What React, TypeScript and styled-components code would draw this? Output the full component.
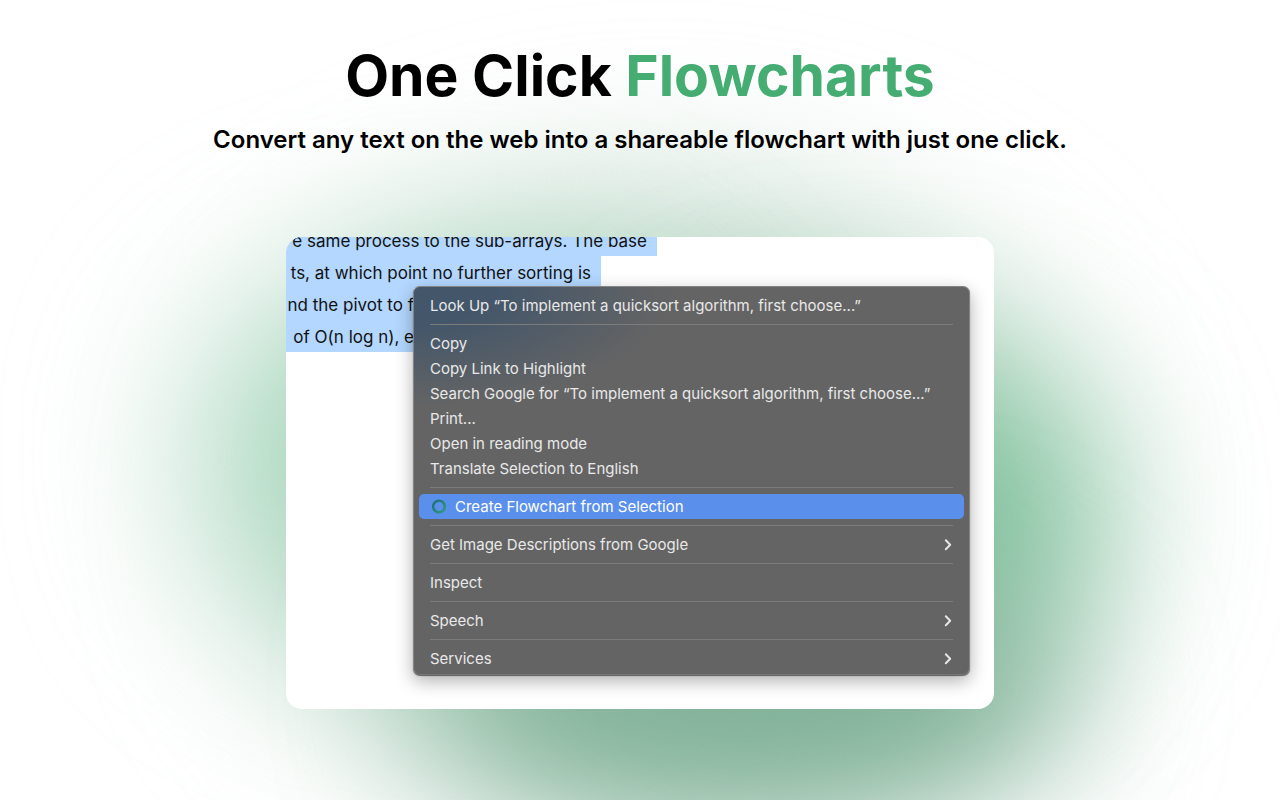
import React from "react";
import styled, { createGlobalStyle } from "styled-components";

const GlobalStyle = createGlobalStyle`
  * { box-sizing: border-box; }
  body {
    margin: 0;
    background: #ffffff;
    color: #000000;
    font-family: Inter, "Liberation Sans", sans-serif;
  }
`;

const Page = styled.main`
  position: relative;
  display: flex;
  flex-direction: column;
  align-items: center;
  min-height: 100vh;
  padding: 40px 24px 91px;
  overflow: hidden;
  isolation: isolate;
`;

const Glow = styled.div<{ $x: number; $y: number; $w: number; $h: number; $blur: number; $color: string }>`
  position: absolute;
  z-index: -1;
  left: calc(50% + ${(p) => p.$x}px);
  top: ${(p) => p.$y}px;
  width: ${(p) => p.$w}px;
  height: ${(p) => p.$h}px;
  border-radius: 50%;
  background: ${(p) => p.$color};
  filter: blur(${(p) => p.$blur}px);
`;

const Title = styled.h1`
  margin: 0;
  font-size: 57px;
  line-height: 72px;
  font-weight: 700;
  text-align: center;
`;

const Accent = styled.span`
  color: #45ad72;
`;

const Subtitle = styled.p`
  margin: 12px 0 0;
  font-size: 24px;
  line-height: 32px;
  font-weight: 600;
  text-align: center;
`;

const Card = styled.section`
  position: relative;
  width: 100%;
  max-width: 708px;
  height: 472px;
  margin-top: 81px;
  border-radius: 16px;
  background: #ffffff;
  overflow: hidden;
`;

const Article = styled.div`
  margin-top: -13px;
  font-size: 17px;
  line-height: 34px;
  color: #111111;
`;

const SelectedLine = styled.div<{ $width: number; $gap: number }>`
  display: flex;
  justify-content: flex-end;
  width: ${(p) => p.$width}px;
  height: 32px;
  padding-right: ${(p) => p.$gap}px;
  background: #b3d7ff;
  white-space: nowrap;
`;

const Menu = styled.div`
  position: absolute;
  right: 24px;
  bottom: 34px;
  width: 557px;
  padding: 6px 5px 3px;
  border: 1px solid #858585;
  border-bottom-color: #757575;
  border-radius: 7px;
  background:
    radial-gradient(ellipse 260px 120px at 0 0, #43566a 30%, #43566a00 100%),
    #646464;
  box-shadow: 0 1px 1px #00000088, 0 6px 18px #00000050;
`;

const Item = styled.button<{ $active?: boolean }>`
  display: flex;
  align-items: center;
  gap: 8px;
  width: 100%;
  height: 25px;
  padding: 0 11px;
  border: 0;
  border-radius: 5px;
  background: ${(p) => (p.$active ? "#5a8fec" : "transparent")};
  color: ${(p) => (p.$active ? "#ffffff" : "#e9e9e9")};
  font: 400 15px/25px Inter, "Liberation Sans", sans-serif;
  text-align: left;
  white-space: nowrap;
`;

const Label = styled.span`
  flex: 1;
`;

const Separator = styled.hr`
  height: 1px;
  margin: 6px 11px;
  border: 0;
  background: #7c7c7c;
`;

const Chevron = () => (
  <svg width="10" height="14" viewBox="0 0 10 14" fill="none" aria-hidden="true">
    <path d="M2.8 2.3 7.2 6.8 2.8 11.3" stroke="#e6e6e6" strokeWidth="2" strokeLinecap="round" strokeLinejoin="round" />
  </svg>
);

const Ring = () => (
  <svg width="17" height="16" viewBox="0 0 17 16" fill="none" aria-hidden="true">
    <defs>
      <linearGradient id="ring" x1="3" y1="2" x2="15" y2="14" gradientUnits="userSpaceOnUse">
        <stop stopColor="#1f6f78" />
        <stop offset="1" stopColor="#2f9c7a" />
      </linearGradient>
    </defs>
    <circle cx="9" cy="7.5" r="5.8" stroke="url(#ring)" strokeWidth="2.6" />
  </svg>
);

type Entry = { label: string; active?: boolean; submenu?: boolean };

const groups: Entry[][] = [
  [{ label: "Look Up “To implement a quicksort algorithm, first choose...”" }],
  [
    { label: "Copy" },
    { label: "Copy Link to Highlight" },
    { label: "Search Google for “To implement a quicksort algorithm, first choose...”" },
    { label: "Print..." },
    { label: "Open in reading mode" },
    { label: "Translate Selection to English" },
  ],
  [{ label: "Create Flowchart from Selection", active: true }],
  [{ label: "Get Image Descriptions from Google", submenu: true }],
  [{ label: "Inspect" }],
  [{ label: "Speech", submenu: true }],
  [{ label: "Services", submenu: true }],
];

export default function App() {
  return (
    <>
      <GlobalStyle />
      <Page>
        <Glow $x={-370} $y={210} $w={780} $h={580} $blur={90} $color="#b5d3c1" />
        <Glow $x={-430} $y={290} $w={480} $h={330} $blur={95} $color="#a2d6ba" />
        <Glow $x={0} $y={350} $w={460} $h={330} $blur={85} $color="#7fc29c" />
        <Glow $x={-210} $y={560} $w={640} $h={260} $blur={75} $color="#80b097" />
        <Title>
          One Click <Accent>Flowcharts</Accent>
        </Title>
        <Subtitle>Convert any text on the web into a shareable flowchart with just one click.</Subtitle>
        <Card>
          <Article>
            <SelectedLine $width={371} $gap={10}>e same process to the sub-arrays. The base</SelectedLine>
            <SelectedLine $width={315} $gap={10}>ts, at which point no further sorting is</SelectedLine>
            <SelectedLine $width={128} $gap={0}>nd the pivot to f</SelectedLine>
            <SelectedLine $width={128} $gap={0}>of O(n log n), e</SelectedLine>
          </Article>
          <Menu role="menu">
            {groups.map((group, i) => (
              <React.Fragment key={i}>
                {i > 0 && <Separator />}
                {group.map((entry) => (
                  <Item key={entry.label} type="button" role="menuitem" $active={entry.active}>
                    {entry.active && <Ring />}
                    <Label>{entry.label}</Label>
                    {entry.submenu && <Chevron />}
                  </Item>
                ))}
              </React.Fragment>
            ))}
          </Menu>
        </Card>
      </Page>
    </>
  );
}
